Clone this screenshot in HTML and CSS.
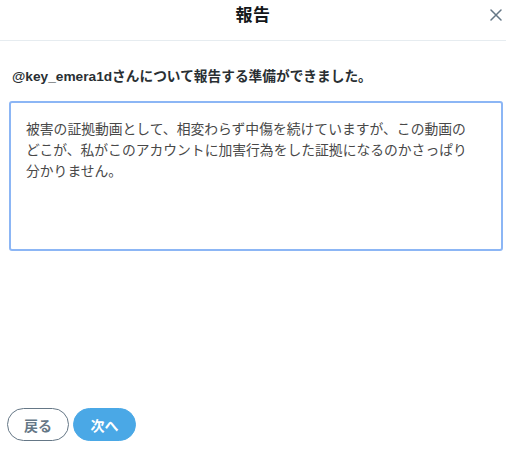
FILE: index.html
```html
<!DOCTYPE html>
<html lang="ja">
<head>
<meta charset="utf-8">
<title>報告</title>
<link rel="stylesheet" href="styles.css">
</head>
<body>
<div class="dialog">
  <header class="dialog-header">
    <span></span>
    <h1 class="dialog-title">報告</h1>
    <button class="close-btn" aria-label="閉じる">
      <svg viewBox="0 0 12 12" width="12" height="12"><path d="M1 1 L11 11 M11 1 L1 11" stroke="#657786" stroke-width="1.5" fill="none" stroke-linecap="round"/></svg>
    </button>
  </header>
  <main class="dialog-body">
    <p class="lead">@key_emera1dさんについて報告する準備ができました。</p>
    <div class="comment-box">被害の証拠動画として、相変わらず中傷を続けていますが、この動画の<br>どこが、私がこのアカウントに加害行為をした証拠になるのかさっぱり<br>分かりません。</div>
  </main>
  <footer class="dialog-footer">
    <button class="btn btn-outline">戻る</button>
    <button class="btn btn-primary">次へ</button>
  </footer>
</div>
</body>
</html>
```
FILE: styles.css
```css
html, body {
  margin: 0;
  padding: 0;
  background: #ffffff;
}
body {
  font-family: "Liberation Sans", "Noto Sans CJK JP", sans-serif;
  color: #14171a;
}
.dialog {
  width: 506px;
  height: 449px;
  display: flex;
  flex-direction: column;
}
.dialog-header {
  height: 40px;
  border-bottom: 1px solid #e6ecf0;
  display: grid;
  grid-template-columns: 1fr auto 1fr;
  align-items: center;
}
.dialog-title {
  margin: 0;
  font-size: 17px;
  font-weight: 700;
  line-height: 20px;
  letter-spacing: 0.5px;
  color: #14171a;
  position: relative;
  top: -4px;
}
.close-btn {
  justify-self: end;
  margin-right: 4px;
  background: none;
  border: 0;
  padding: 0;
  width: 12px;
  height: 12px;
  display: flex;
  position: relative;
  top: -5px;
}
.close-btn svg { display: block; }
.dialog-body {
  flex: 1;
  padding: 0 3px 0 9px;
}
.lead {
  margin: 26px 0 0 3px;
  font-size: 13.7px;
  font-weight: 700;
  line-height: 20px;
  color: #292f33;
}
.comment-box {
  margin-top: 14px;
  box-sizing: border-box;
  height: 150px;
  border: 2px solid #8cb6f5;
  border-radius: 3px;
  padding: 15px 10px 0 15px;
  font-size: 13.8px;
  line-height: 21px;
  color: #484848;
  font-family: "Noto Sans CJK JP", sans-serif;
  white-space: nowrap;
}
.dialog-footer {
  display: flex;
  gap: 4px;
  padding: 0 0 8px 7px;
}
.btn {
  height: 33px;
  border-radius: 17px;
  font-family: "Noto Sans CJK JP", sans-serif;
  font-size: 14px;
  font-weight: 700;
  padding: 0;
  box-sizing: border-box;
  display: flex;
  align-items: center;
  justify-content: center;
}
.btn-outline {
  width: 62px;
  background: #fff;
  border: 1px solid #657786;
  color: #657786;
}
.btn-primary {
  width: 63px;
  background: #4aa8e6;
  border: 1px solid #4aa8e6;
  color: #fff;
}
```
